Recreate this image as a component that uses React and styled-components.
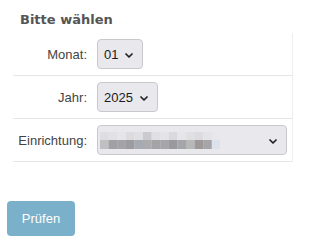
import React from "react";
import styled, { createGlobalStyle } from "styled-components";

const GlobalStyle = createGlobalStyle`
    body {
        margin: 0;
        background: #ffffff;
        font-family: "Liberation Sans", Arial, sans-serif;
    }
`

// pixelated (redacted) name of the facility
const blurTop = ["#dedee2", "#e2e2e6", "#e6e6ea", "#dcdce0", "#e0e0e4", "#cbcbcf", "#e0e0e4", "#e4e4e8", "#dadade", "#e6e6ea", "#e0e0e4", "#dcdce0", "#e4e4e8", "#e8e8ec"]
const blurBottom = ["#c0c0c0", "#a0a0a6", "#a4a4a8", "#9c9ca0", "#a8aab2", "#acacae", "#a2a4a6", "#a6a6aa", "#989aa0", "#a4a6aa", "#b8b8b8", "#9e9898", "#a6a6aa", "#dde2ea"]

function Chevron() {
    return (
        <svg width="8" height="5" viewBox="0 0 8 5">
            <path d="M1 1 L4 4 L7 1" fill="none" stroke="#222" strokeWidth="1.7" strokeLinecap="round" strokeLinejoin="round" />
        </svg>
    )
}

function Blurred() {
    return (
        <svg width="120" height="17" viewBox="0 0 120 17">
            {blurTop.map((c, i) => (
                <rect key={"t" + i} x={i * 8.6} y="0" width="8.7" height="8" fill={c} />
            ))}
            {blurBottom.map((c, i) => (
                <rect key={"b" + i} x={i * 8.6} y="8" width="8.7" height="9" fill={c} />
            ))}
        </svg>
    )
}

function App() {
    return (
        <Wrapper>
            <GlobalStyle />
            <Heading>Bitte wählen</Heading>
            <Table>
                <Row>
                    <Label>Monat:</Label>
                    <Cell>
                        <Select>
                            <Value>01</Value>
                            <Chevron />
                        </Select>
                    </Cell>
                </Row>
                <Row>
                    <Label>Jahr:</Label>
                    <Cell>
                        <Select>
                            <Value>2025</Value>
                            <Chevron />
                        </Select>
                    </Cell>
                </Row>
                <Row>
                    <Label>Einrichtung:</Label>
                    <Cell>
                        <Select $wide>
                            <Blurred />
                            <Chevron />
                        </Select>
                    </Cell>
                </Row>
            </Table>
            <Button>Prüfen</Button>
        </Wrapper>
    )
}

export default App

const Wrapper = styled.div`
    width: 301px;
    height: 243px;
    display: flex;
    flex-direction: column;
    align-items: flex-start;
`

const Heading = styled.h3`
    margin: 11px 0 0 20px;
    font-family: "DejaVu Sans", sans-serif;
    font-weight: 700;
    font-size: 13px;
    line-height: 18px;
    color: #555555;
`

const Table = styled.div`
    width: 279px;
    margin: 4px 0 0 13px;
    border-right: 1px solid #eeeeee;
    display: flex;
    flex-direction: column;
`

const Row = styled.div`
    display: grid;
    grid-template-columns: 79px 1fr;
    align-items: center;
    height: 42px;
    border-bottom: 1px solid #e6e6e6;
`

const Label = styled.div`
    padding-right: 5px;
    text-align: right;
    font-size: 13px;
    color: #444444;
`

const Cell = styled.div`
    padding: 0 5px;
    display: flex;
`

const Select = styled.div`
    box-sizing: border-box;
    height: 30px;
    width: ${p => (p.$wide ? "100%" : "auto")};
    padding: 0 9px 0 ${p => (p.$wide ? "2px" : "6px")};
    display: flex;
    align-items: center;
    justify-content: space-between;
    gap: 7px;
    background: #e9e9ed;
    border: 1px solid #c9c9cd;
    border-radius: 4px;

    svg:last-child {
        margin-top: 2px;
    }
`

const Value = styled.span`
    font-size: 13px;
    color: #1b1b1b;
`

const Button = styled.div`
    margin: 39px 0 0 7px;
    width: 68px;
    height: 35px;
    display: flex;
    align-items: center;
    justify-content: center;
    background: #7ab0c9;
    border-radius: 4px;
    font-size: 13px;
    color: #ffffff;
`
